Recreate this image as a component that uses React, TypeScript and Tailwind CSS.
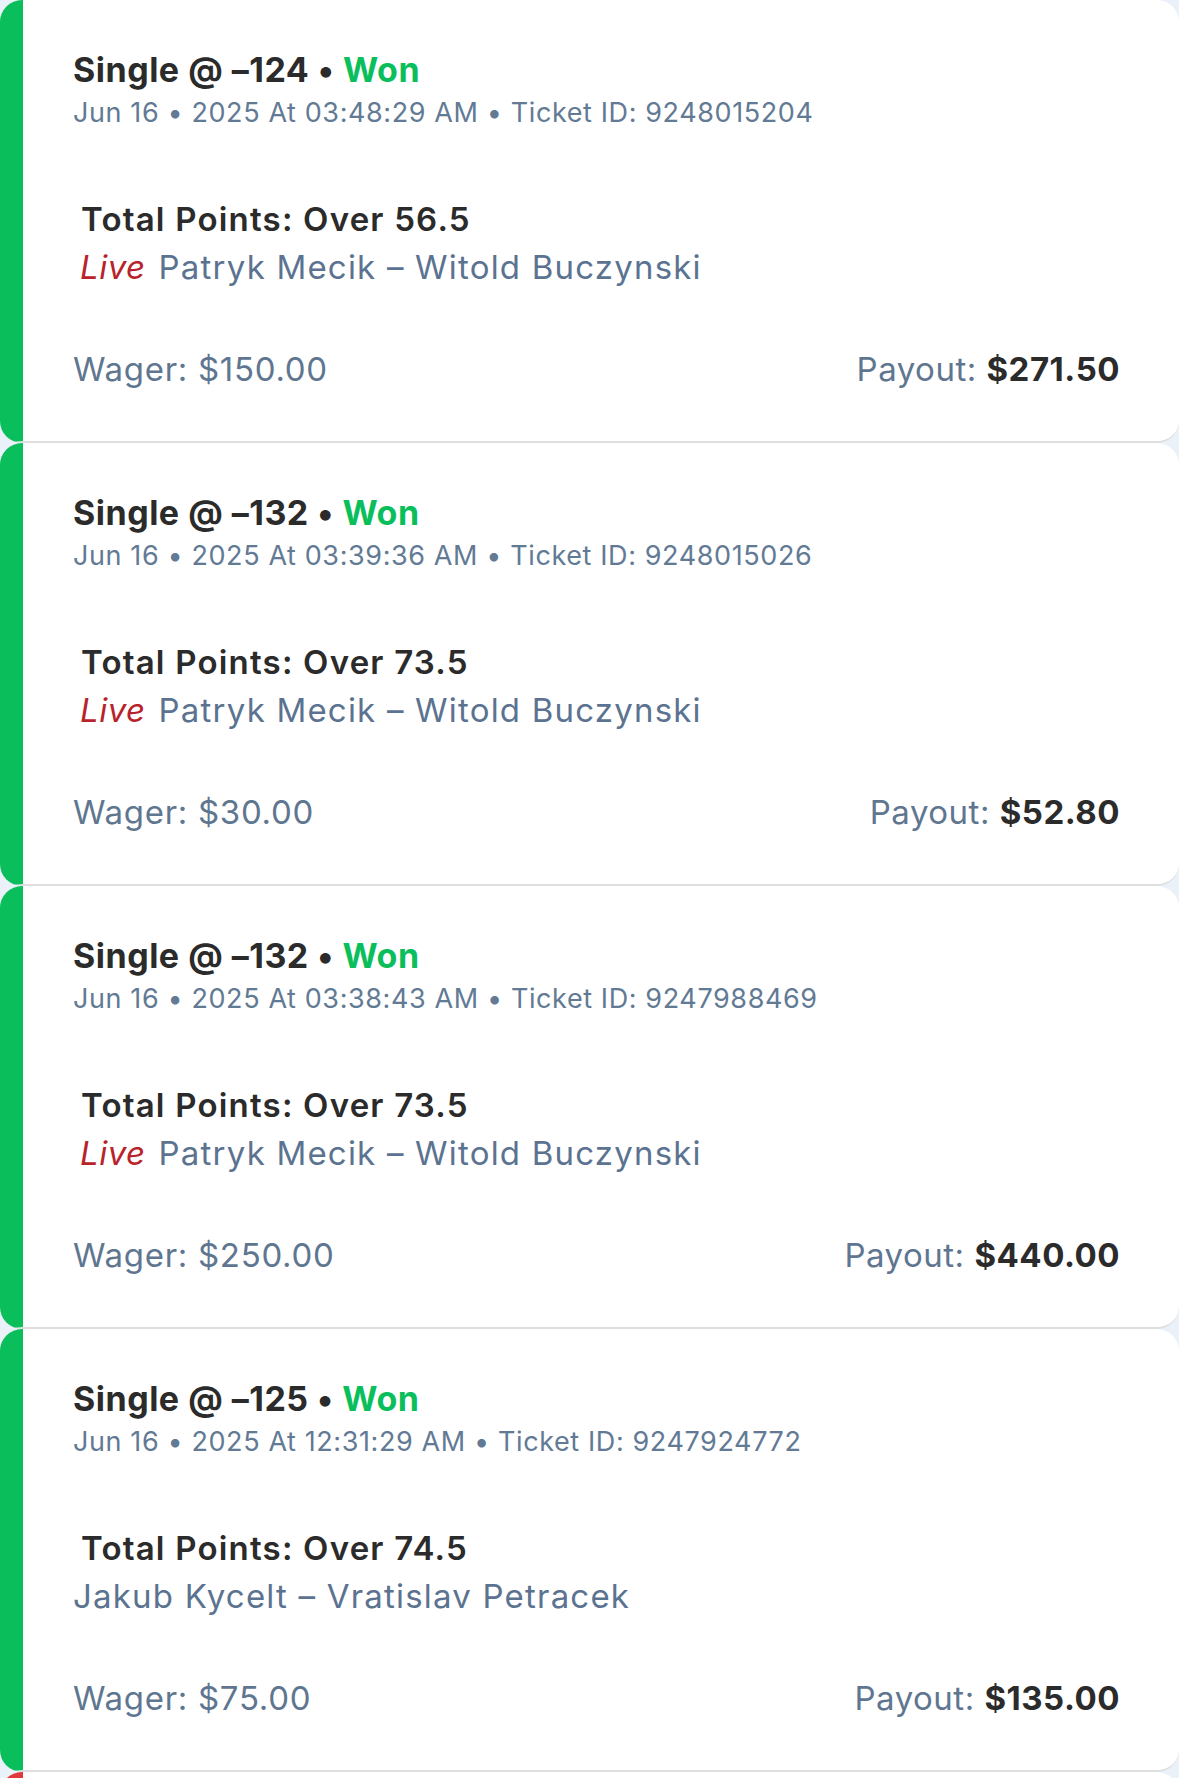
import React from "react";

type Bet = {
  odds: string;
  placed: string;
  ticket: string;
  market: string;
  live: boolean;
  event: string;
  wager: string;
  payout: string;
};

const bets: Bet[] = [
  {
    odds: "-124",
    placed: "Jun 16 • 2025 At 03:48:29 AM",
    ticket: "9248015204",
    market: "Total Points: Over 56.5",
    live: true,
    event: "Patryk Mecik - Witold Buczynski",
    wager: "$150.00",
    payout: "$271.50",
  },
  {
    odds: "-132",
    placed: "Jun 16 • 2025 At 03:39:36 AM",
    ticket: "9248015026",
    market: "Total Points: Over 73.5",
    live: true,
    event: "Patryk Mecik - Witold Buczynski",
    wager: "$30.00",
    payout: "$52.80",
  },
  {
    odds: "-132",
    placed: "Jun 16 • 2025 At 03:38:43 AM",
    ticket: "9247988469",
    market: "Total Points: Over 73.5",
    live: true,
    event: "Patryk Mecik - Witold Buczynski",
    wager: "$250.00",
    payout: "$440.00",
  },
  {
    odds: "-125",
    placed: "Jun 16 • 2025 At 12:31:29 AM",
    ticket: "9247924772",
    market: "Total Points: Over 74.5",
    live: false,
    event: "Jakub Kycelt - Vratislav Petracek",
    wager: "$75.00",
    payout: "$135.00",
  },
];

function BetCard({ bet }: { bet: Bet }) {
  return (
    <div className="h-[443px] shrink-0 rounded-[22px] border-l-[23px] border-b-2 border-l-[#0abf5b] border-b-[#dedede] bg-white pl-[50px] pr-[59px] pt-[50px]">
      <div className="text-[34px] leading-[40px] font-bold tracking-[0.5px] text-[#2b2b2b]">
        Single @ {bet.odds.replace("-", "\u2013")} • <span className="text-[#0abf5b]">Won</span>
      </div>
      <div className="mt-[6px] text-[27px] leading-[34px] tracking-[0.6px] text-[#627a94]">
        {bet.placed} • Ticket ID: {bet.ticket}
      </div>
      <div className="mt-[69px] pl-[8px] text-[33px] leading-[40px] font-semibold tracking-[1.2px] text-[#2b2b2b]">
        {bet.market}
      </div>
      <div className="mt-[8px] text-[33px] leading-[40px] tracking-[1.2px] text-[#5b7390]">
        {bet.live && <span className="ml-[7px] mr-[13px] italic tracking-[0.5px] text-[#b8232b]">Live</span>}
        {bet.event.replace(" - ", " \u2013 ")}
      </div>
      <div className="mt-[62px] flex items-center justify-between text-[33px] leading-[40px] text-[#5f7690]">
        <span className="tracking-[0.7px]">Wager: {bet.wager}</span>
        <span className="tracking-[0.5px]">
          Payout: <span className="font-bold text-[#2b2b2b]">{bet.payout}</span>
        </span>
      </div>
    </div>
  );
}

export default function App() {
  return (
    <div
      className="flex h-[1778px] flex-col overflow-hidden bg-[#eaf1f8]"
      style={{ fontFamily: "Inter, 'Noto Sans', sans-serif" }}
    >
      {bets.map((b) => (
        <BetCard key={b.ticket} bet={b} />
      ))}
      <div className="h-[443px] shrink-0 rounded-[22px] border-l-[23px] border-l-[#e0393e] bg-white" />
    </div>
  );
}
